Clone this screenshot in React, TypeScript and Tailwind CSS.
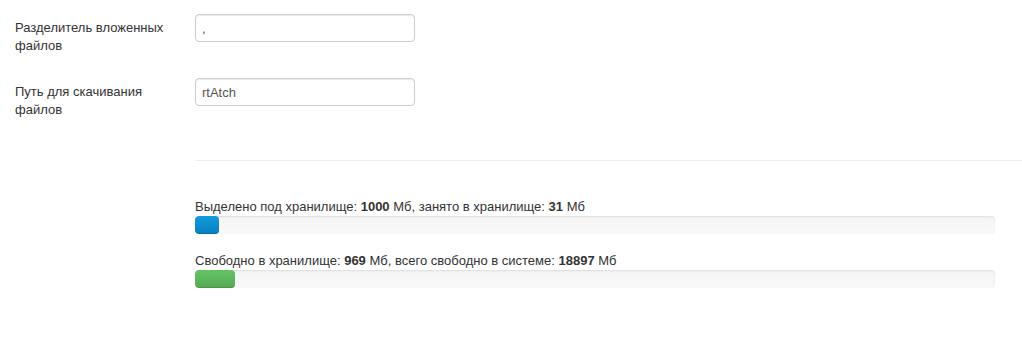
export default function App() {
  return (
    <div className="w-[1022px] h-[338px] bg-white text-[13px] text-[#333] overflow-hidden" style={{ fontFamily: '"Liberation Sans", Arial, sans-serif' }}>
      <div className="pt-[14px]">
        <div className="flex items-start">
          <label className="w-[195px] shrink-0 pl-[15px] pr-[15px] pt-[5px] leading-[18px]">Разделитель вложенных файлов</label>
          <input
            className="w-[220px] h-[28px] px-[6px] border border-[#ccc] rounded-[4px] text-[#555] text-[13px] outline-none shadow-[inset_0_1px_1px_rgba(0,0,0,0.075)]"
            defaultValue=","
          />
        </div>
        <div className="flex items-start mt-[23px]">
          <label className="w-[195px] shrink-0 pl-[15px] pr-[15px] pt-[5px] leading-[18px]">Путь для скачивания файлов</label>
          <input
            className="w-[220px] h-[28px] px-[6px] border border-[#ccc] rounded-[4px] text-[#555] text-[13px] outline-none shadow-[inset_0_1px_1px_rgba(0,0,0,0.075)]"
            defaultValue="rtAtch"
          />
        </div>
      </div>
      <div className="ml-[195px] mt-[41px] border-t border-[#eee]" />
      <div className="ml-[195px] mt-[36px] w-[800px]">
        <div className="leading-[19px]">
          Выделено под хранилище: <b>1000</b> Мб, занято в хранилище: <b>31</b> Мб
        </div>
        <div className="h-[18px] rounded-[4px] bg-gradient-to-b from-[#f5f5f5] to-[#f9f9f9] shadow-[inset_0_1px_2px_rgba(0,0,0,0.1)] overflow-hidden">
          <div className="h-full w-[24px] rounded-[4px] bg-gradient-to-b from-[#149bdf] to-[#0480be] shadow-[inset_0_-1px_0_rgba(0,0,0,0.15)]" />
        </div>
        <div className="leading-[19px] mt-[17px]">
          Свободно в хранилище: <b>969</b> Мб, всего свободно в системе: <b>18897</b> Мб
        </div>
        <div className="h-[18px] rounded-[4px] bg-gradient-to-b from-[#f5f5f5] to-[#f9f9f9] shadow-[inset_0_1px_2px_rgba(0,0,0,0.1)] overflow-hidden">
          <div className="h-full w-[40px] rounded-[4px] bg-gradient-to-b from-[#62c462] to-[#57a957] shadow-[inset_0_-1px_0_rgba(0,0,0,0.15)]" />
        </div>
      </div>
    </div>
  );
}
